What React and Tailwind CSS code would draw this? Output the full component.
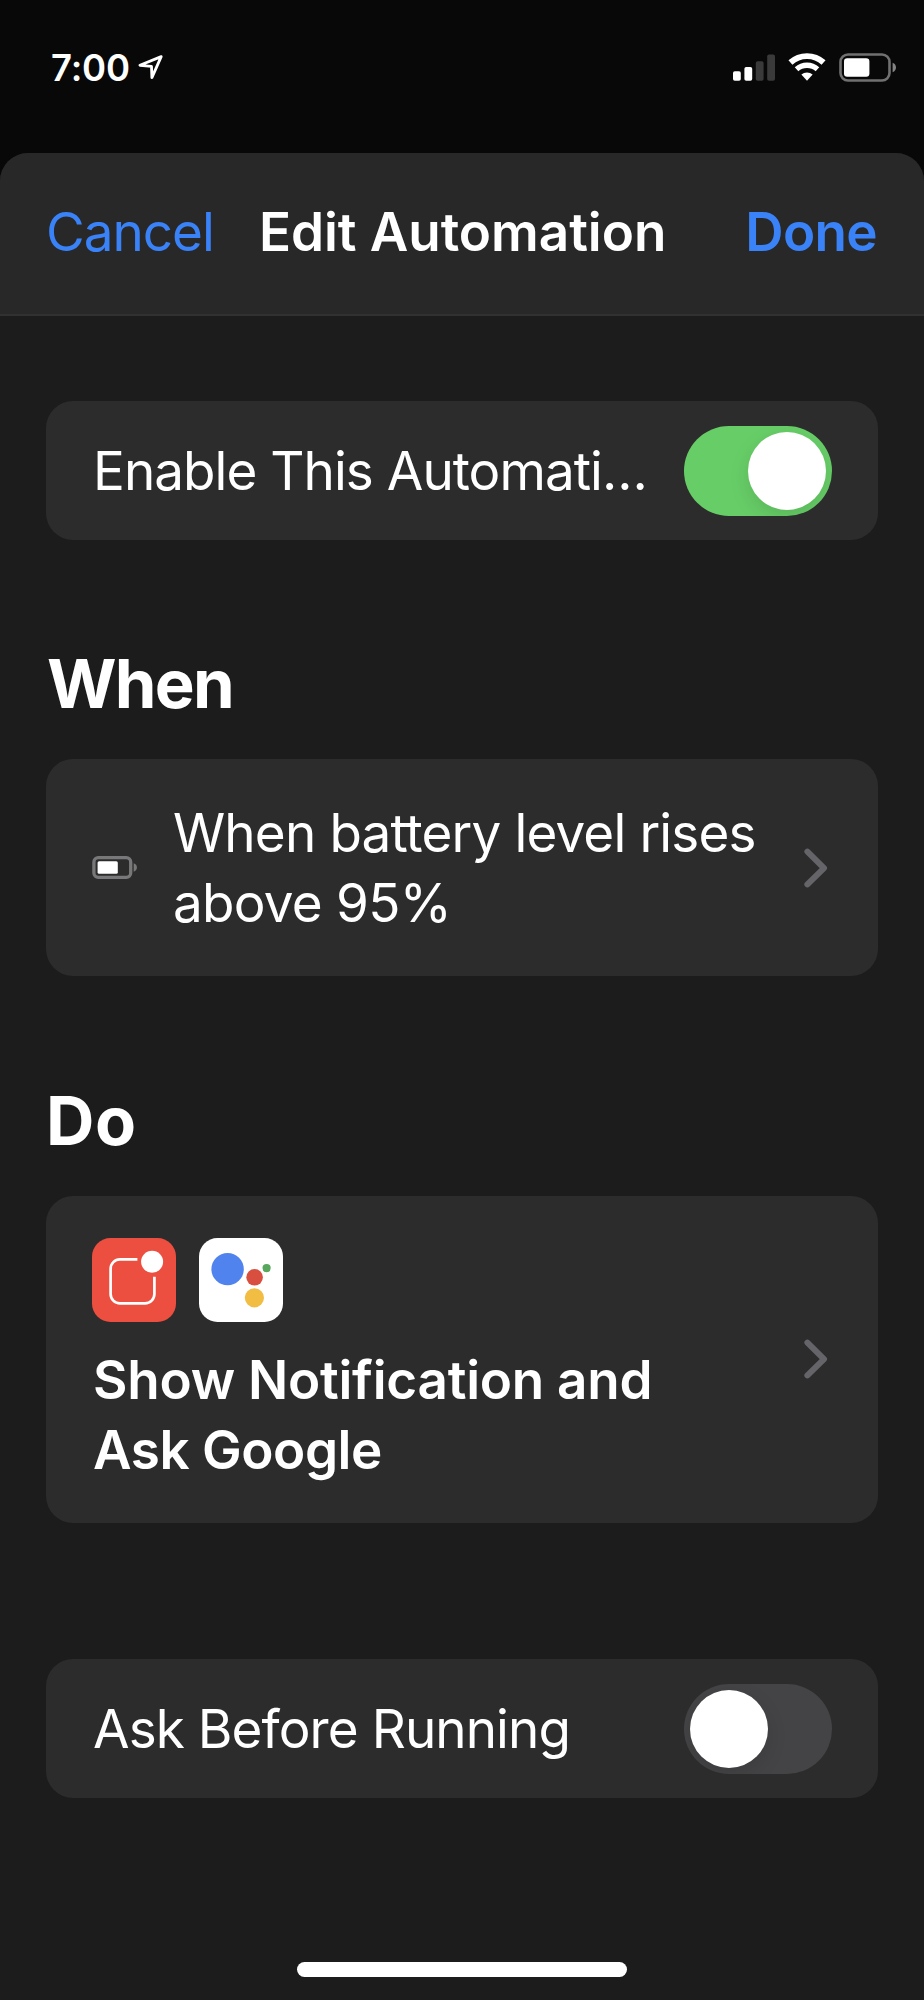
import React, { useState } from "react";

function StatusBar() {
  return (
    <div className="h-[153px] pt-[47px] pl-[51px] pr-[27px] shrink-0">
      <div className="h-[40px] flex items-center justify-between">
        <div className="flex items-center">
          <span className="pt-px text-[36.5px] leading-[40px] font-semibold tracking-[-0.17px]">7:00</span>
          <svg className="ml-[8px]" width="26" height="26" viewBox="0 0 26 26" fill="none" stroke="white" strokeWidth="2.8" strokeLinejoin="round">
            <path d="M23.2 2.6L1.9 11.3L13.5 12.3L13.9 23.6Z" />
          </svg>
        </div>
        <div className="flex items-center gap-[13px]">
          <svg width="42" height="27" viewBox="0 0 42 27">
            <rect x="0" y="17.2" width="7.8" height="9.6" rx="1.8" fill="white" />
            <rect x="11.4" y="13" width="7.8" height="13.8" rx="1.8" fill="white" />
            <rect x="22.8" y="7.2" width="7.8" height="19.6" rx="1.8" fill="#3a3a3a" />
            <rect x="34.2" y="0.4" width="7.8" height="26.4" rx="1.8" fill="#3a3a3a" />
          </svg>
          <svg width="38" height="28" viewBox="0 0 38.4 28" fill="none" stroke="white">
            <path d="M2.47 9.42A25 25 0 0 1 35.93 9.42" strokeWidth="6" />
            <path d="M8.63 16.26A15.8 15.8 0 0 1 29.77 16.26" strokeWidth="5.4" />
            <path d="M19.2 28L13.5 21.7A8.5 8.5 0 0 1 24.9 21.7Z" fill="white" stroke="none" />
          </svg>
          <svg width="58" height="29" viewBox="0 0 58 29">
            <rect x="1.5" y="1.5" width="49" height="26" rx="7.5" fill="none" stroke="#707070" strokeWidth="2.6" />
            <rect x="5" y="5.2" width="25.4" height="18.6" rx="3.2" fill="white" />
            <path d="M53.6 9.8C55.8 10.6 57 12.3 57 14.5C57 16.7 55.8 18.4 53.6 19.2Z" fill="#848484" />
          </svg>
        </div>
      </div>
    </div>
  );
}

function Toggle({ checked, onChange }) {
  return (
    <button
      role="switch"
      aria-checked={checked}
      onClick={() => onChange(!checked)}
      className={`w-[148px] h-[90px] p-[6px] shrink-0 rounded-full overflow-hidden flex cursor-pointer ${
        checked ? "bg-[#67ce67] justify-end" : "bg-[#444446] justify-start"
      }`}
    >
      <span className="w-[78px] h-[78px] rounded-full bg-white shadow-[0_7px_20px_rgba(0,0,0,0.12)]" />
    </button>
  );
}

function Chevron() {
  return (
    <svg className="shrink-0" width="24" height="40" viewBox="0 0 24 40" fill="none" stroke="#656569" strokeWidth="6" strokeLinecap="round" strokeLinejoin="round">
      <path d="M3.4 3.6L20 20.1L3.4 36.4" />
    </svg>
  );
}

function BatteryIcon() {
  return (
    <svg className="shrink-0" width="45" height="23" viewBox="0 0 45 23">
      <rect x="1.9" y="1.7" width="36.8" height="19.6" rx="4.4" fill="none" stroke="#78787a" strokeWidth="3.3" />
      <rect x="5.6" y="5.3" width="20.2" height="12.4" rx="1.5" fill="white" />
      <path d="M41.7 7.3C43.8 8 44.9 9.5 44.9 11.5C44.9 13.5 43.8 15 41.7 15.7Z" fill="#78787a" />
    </svg>
  );
}

function NotificationIcon() {
  return (
    <svg width="84" height="84" viewBox="0 0 84 84">
      <rect width="84" height="84" rx="18.5" fill="#ec4e3f" />
      <path
        d="M45.4 21.4H28A9.4 9.4 0 0 0 18.6 30.8V56A9.4 9.4 0 0 0 28 65.4H53A9.4 9.4 0 0 0 62.4 56V38.8"
        fill="none"
        stroke="white"
        strokeWidth="2.7"
      />
      <circle cx="60.1" cy="23.8" r="11" fill="white" />
    </svg>
  );
}

function AssistantIcon() {
  return (
    <svg width="84" height="84" viewBox="0 0 84 84">
      <rect width="84" height="84" rx="18.5" fill="white" />
      <circle cx="28.6" cy="31.1" r="16.2" fill="#5083ed" />
      <circle cx="55.6" cy="39.3" r="8.3" fill="#d94f3f" />
      <circle cx="67.6" cy="30.1" r="4.1" fill="#57a75c" />
      <circle cx="55.4" cy="59.8" r="9.6" fill="#f1bd42" />
    </svg>
  );
}

export default function App() {
  const [enabled, setEnabled] = useState(true);
  const [askFirst, setAskFirst] = useState(false);

  return (
    <div className="w-[924px] h-[2000px] bg-[#080808] text-white font-[Inter,'Liberation_Sans',sans-serif] flex flex-col overflow-hidden">
      <StatusBar />
      <div className="flex-1 flex flex-col bg-[#1c1c1c] rounded-t-[28px] overflow-hidden">
        <header className="h-[163px] shrink-0 flex items-start pt-[49px] pl-[46px] pr-[47px] bg-[#282828] border-b-2 border-[#313131] text-[53px] leading-[60px] whitespace-nowrap">
          <button className="text-[#3a82f7] tracking-[-0.99px] cursor-pointer">Cancel</button>
          <h1 className="ml-[45px] font-semibold tracking-[-0.04px]">Edit Automation</h1>
          <button className="ml-auto text-[#3a82f7] font-semibold tracking-[-0.66px] cursor-pointer">Done</button>
        </header>

        <main className="px-[46px] pt-[85px] text-[53px] leading-[70px] whitespace-nowrap">
          <div className="h-[138.5px] pt-[1.5px] pl-[47px] pr-[46px] flex items-center justify-between bg-[#2c2c2c] rounded-[27px]">
            <span className="tracking-[-0.96px]">Enable This Automati…</span>
            <Toggle checked={enabled} onChange={setEnabled} />
          </div>

          <h2 className="mt-[104px] mb-[35.5px] pl-px text-[67px] leading-[80px] font-bold tracking-[-1.71px]">When</h2>
          <div className="h-[217px] pl-[46px] pr-[50px] flex items-center bg-[#2c2c2c] rounded-[27px]">
            <BatteryIcon />
            <p className="ml-[36px] flex-1 tracking-[-0.86px]">
              When battery level rises
              <br />
              <span className="tracking-[-0.74px]">above 95%</span>
            </p>
            <Chevron />
          </div>

          <h2 className="mt-[104.5px] mb-[35.5px] text-[67px] leading-[80px] font-bold tracking-[0.6px]">Do</h2>
          <div className="h-[326.5px] pl-[46px] pr-[50px] flex items-center bg-[#2c2c2c] rounded-[27px]">
            <div className="flex-1 pt-[4px]">
              <div className="flex gap-[23px]">
                <NotificationIcon />
                <AssistantIcon />
              </div>
              <p className="mt-[22.5px] pl-px font-semibold tracking-[-0.25px]">
                Show Notification and
                <br />
                <span className="tracking-[-0.45px]">Ask Google</span>
              </p>
            </div>
            <Chevron />
          </div>

          <div className="mt-[136.5px] h-[138.5px] pt-[1.5px] pl-[47px] pr-[46px] flex items-center justify-between bg-[#2c2c2c] rounded-[27px]">
            <span className="tracking-[-0.92px]">Ask Before Running</span>
            <Toggle checked={askFirst} onChange={setAskFirst} />
          </div>
        </main>

        {/* home indicator */}
        <div className="mt-auto mb-[23px] mx-auto w-[330px] h-[15px] rounded-full bg-white" />
      </div>
    </div>
  );
}
